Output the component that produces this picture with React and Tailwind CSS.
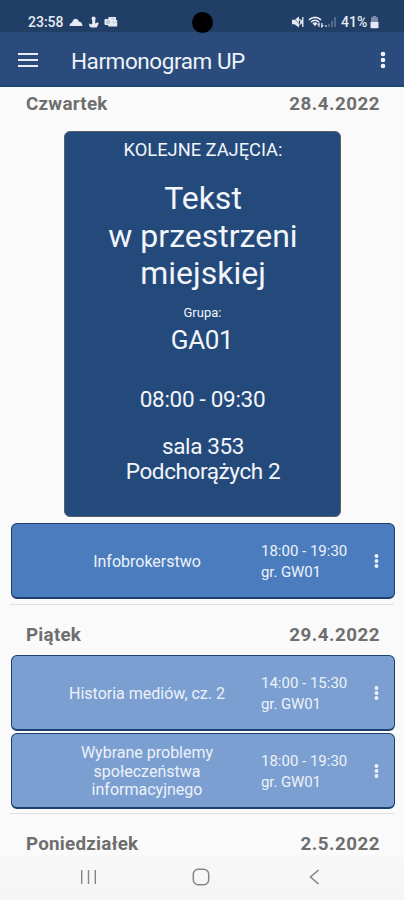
import { useState } from 'react';

// Upcoming classes, grouped by day
const fridayClasses = [
  { id: 2, lines: ['Historia mediów, cz. 2'], time: '14:00 - 15:30', group: 'GW01' },
  {
    id: 3,
    lines: ['Wybrane problemy', 'społeczeństwa', 'informacyjnego'],
    time: '18:00 - 19:30',
    group: 'GW01'
  }
];

const Dots = ({ className }) => (
  <svg viewBox="0 0 6 18" className={className} fill="currentColor">
    <circle cx="3" cy="3" r="2.3" />
    <circle cx="3" cy="9" r="2.3" />
    <circle cx="3" cy="15" r="2.3" />
  </svg>
);

const StatusBar = () => (
  <div className="h-8 shrink-0 bg-[#213f66] text-[#e6eaf2] flex items-start justify-between pl-[28px] pr-[25px] relative">
    <div className="flex items-center h-5 mt-[12px]">
      <span className="text-[14px] leading-5 font-medium w-[36px] whitespace-nowrap">23:58</span>
      <svg viewBox="0 0 14 10" className="w-[14px] h-[10px] ml-[5px]" fill="currentColor">
        <path d="M0.5 9C0.500 7 1.500 6 3 5.800C3.500 3.500 5 1.800 6.500 1.800C8.300 1.800 9.200 3 9.900 4.600C12 4.800 13.500 6.500 13.500 9z" />
      </svg>
      <svg viewBox="0 0 12 12" className="w-[12px] h-[12px] ml-[5px]" fill="currentColor">
        <circle cx="5.600" cy="2.400" r="2" />
        <path d="M4.200 3h3v4.500L9.700 6.300l1 1.200-2 4H3.500C1.400 11.200.6 9 1.200 7.200l1.500 1.300L4.200 7.800z" />
      </svg>
      <svg viewBox="0 0 14 12" className="w-[14px] h-[12px] ml-[4px]" fill="none" stroke="currentColor">
        <path d="M4.500 1h7.500v3h1.200v6.500h-9z" fill="currentColor" stroke="none" />
        <rect x="0.500" y="3" width="7" height="6" rx="1" fill="currentColor" stroke="none" />
        <circle cx="4" cy="6" r="1.400" stroke="#9fadc2" />
        <path d="M8.300 5.500l2.300 1.500L13 5.300M7 2.800h3.600" stroke="#a9b6c9" strokeWidth="0.800" />
      </svg>
    </div>
    {/* camera hole */}
    <div className="absolute left-[192px] top-[12px] w-[21px] h-[21px] rounded-full bg-black z-10" />
    <div className="flex items-center h-5 mt-[12px]">
      <svg viewBox="0 0 14 12" className="w-[14px] h-[12px]" fill="currentColor">
        <path d="M1 3.700h2.500L8 .5v11L3.500 8.300H1z" />
        <path d="M8.500 3l3.500 6M12 3l-3.500 6M11.800 1v10" stroke="currentColor" strokeWidth="1.300" />
        <path d="M2 1l9 10" stroke="#213f66" strokeWidth="0.600" />
      </svg>
      <svg viewBox="0 0 16 12" className="w-[16px] h-[12px] ml-[3px]" fill="none" stroke="currentColor" strokeWidth="1.600">
        <path d="M1 3.800C4.500.600 9.500.600 13 3.800M3 6C5.500 3.800 8.500 3.800 11 6" />
        <path d="M4.500 7.300c1.700-1.300 3.300-1.300 5 0L7 10.300z" fill="currentColor" stroke="none" />
        <path d="M11 11V7.500l-1.300 1.300M13.800 7v3.600l1.500-1.300" strokeWidth="1.200" />
      </svg>
      <svg viewBox="0 0 13 12" className="w-[13px] h-[12px]" fill="currentColor">
        <path d="M1 9h2v2H1z" opacity="0.600" />
        <path d="M4 8h2v3H4zM7 5h2v6H7zM10 1h2v10h-2z" opacity="0.250" />
      </svg>
      <span className="text-[14px] leading-5 font-medium ml-[4px] w-[29px] whitespace-nowrap">41%</span>
      <svg viewBox="0 0 9 13" className="w-[9px] h-[13px]" fill="currentColor">
        <path d="M2.800 0h3.400v1.200H8V6H1V1.200h1.800z" opacity="0.450" />
        <path d="M0.500 6h8v5.200l-1 1h-6l-1-1z" />
      </svg>
    </div>
  </div>
);

const AppBar = ({ onMenu }) => (
  <header className="h-[55px] shrink-0 bg-[#2a4b7c] border-b-2 border-[#1f4473] text-[#eef2f9] flex items-center pl-[18px] pr-[18px]">
    <button onClick={onMenu} aria-label="Menu" className="w-5 h-[14px] mt-[3px] flex flex-col justify-between">
      <span className="h-[2px] w-full bg-[#e8edf6]" />
      <span className="h-[2px] w-full bg-[#e8edf6]" />
      <span className="h-[2px] w-full bg-[#e8edf6]" />
    </button>
    <h1 className="ml-[33px] mt-[5px] flex-1 text-[22.5px] leading-7 whitespace-nowrap tracking-[-0.43px]">Harmonogram UP</h1>
    <button aria-label="Opcje" className="mt-[2px]">
      <Dots className="w-[6px] h-[18px]" />
    </button>
  </header>
);

const DayHeader = ({ day, date }) => (
  <div className="flex items-center justify-between pl-[26px] pr-[24px] h-6 text-[18.8px] font-bold text-[#6e6e6e]">
    <span className="tracking-[0.25px]">{day}</span>
    <span className="tracking-[0.5px]">{date}</span>
  </div>
);

const NextClass = () => (
  <section className="mx-auto w-[277px] h-[386px] mt-[15px] bg-[#244a7c] border border-[#56616e] rounded-[6px] text-[#f2f5fa] text-center flex flex-col items-center">
    <p className="mt-[6px] pl-[2px] text-[18.3px] leading-6">KOLEJNE ZAJĘCIA:</p>
    <h2 className="mt-[18px] pl-[2px] text-[32px] leading-[37.5px]">
      Tekst
      <br />
      w przestrzeni
      <br />
      miejskiej
    </h2>
    <p className="mt-[12px] pl-px text-[13px] leading-4">Grupa:</p>
    <p className="mt-[3px] text-[26px] leading-8 tracking-[-0.4px]">GA01</p>
    <p className="mt-[29px] pl-px text-[22.5px] leading-7 tracking-[-0.3px]">08:00 - 09:30</p>
    <p className="mt-[21px] pl-[2px] text-[22.5px] leading-[25px] tracking-[-0.4px]">
      sala 353
      <br />
      Podchorążych 2
    </p>
  </section>
);

const ClassRow = ({ lines, time, group, className }) => (
  <div className={`ml-[11px] mr-[9px] border border-b-2 rounded-[6px] text-[#edf2fa] flex items-center ${className}`}>
    <div className="w-[210px] ml-[30px] mt-[3px] text-center text-[16px] leading-[18.7px]">
      {lines.map((line) => (
        <p key={line}>{line}</p>
      ))}
    </div>
    <div className="ml-[9px] mt-[2px] flex-1 text-[15px] leading-[20.5px] whitespace-nowrap">
      <p>{time}</p>
      <p className="tracking-[-0.1px]">gr. {group}</p>
    </div>
    <button aria-label="Więcej" className="mr-[15px]">
      <Dots className="w-[5px] h-[16px]" />
    </button>
  </div>
);

const NavBar = () => (
  <nav className="h-[45px] shrink-0 bg-linear-to-b from-[#f8f8f8] to-[#f5f5f5] text-[#858585] flex items-center pl-[80px]">
    <svg viewBox="0 0 18 16" className="w-[18px] h-4 mb-px" fill="none" stroke="currentColor" strokeWidth="1.4">
      <path d="M1.700 1v14M8.500 1v14M15.300 1v14" />
    </svg>
    <svg viewBox="0 0 18 18" className="w-[18px] h-[18px] ml-[94px] mb-px" fill="none" stroke="currentColor" strokeWidth="1.500">
      <rect x="1.300" y="1.300" width="15.400" height="15.400" rx="5" />
    </svg>
    <svg viewBox="0 0 12 16" className="w-3 h-4 ml-[98px] mb-px" fill="none" stroke="currentColor" strokeWidth="1.600">
      <path d="M10.500 1L2.500 8l8 7" />
    </svg>
  </nav>
);

const App = () => {
  const [menuOpen, setMenuOpen] = useState(false);

  return (
    <div className="w-[404px] h-[900px] overflow-hidden bg-[#fafafa] flex flex-col font-[Roboto,sans-serif]">
      <StatusBar />
      <AppBar onMenu={() => setMenuOpen(!menuOpen)} />

      <main className="flex-1 min-h-0 pt-[5px]">
        <DayHeader day="Czwartek" date="28.4.2022" />
        <NextClass />
        <ClassRow
          lines={['Infobrokerstwo']}
          time="18:00 - 19:30"
          group="GW01"
          className="h-[76px] mt-[6px] bg-[#4b7dbe] border-[#1d3f6e]"
        />
        <hr className="mx-[10px] mt-[5px] border-[#dedede]" />

        <div className="mt-[18px]">
          <DayHeader day="Piątek" date="29.4.2022" />
          <div className="mt-[8px] flex flex-col gap-[2px]">
            {fridayClasses.map((item) => (
              <ClassRow
                key={item.id}
                lines={item.lines}
                time={item.time}
                group={item.group}
                className="h-[76px] bg-[#7b9fd0] border-[#1d3f6e]"
              />
            ))}
          </div>
        </div>
        <hr className="mx-[10px] mt-[4px] border-[#dedede]" />

        <div className="mt-[18px]">
          <DayHeader day="Poniedziałek" date="2.5.2022" />
        </div>
      </main>

      <NavBar />
    </div>
  );
};

export default App;
